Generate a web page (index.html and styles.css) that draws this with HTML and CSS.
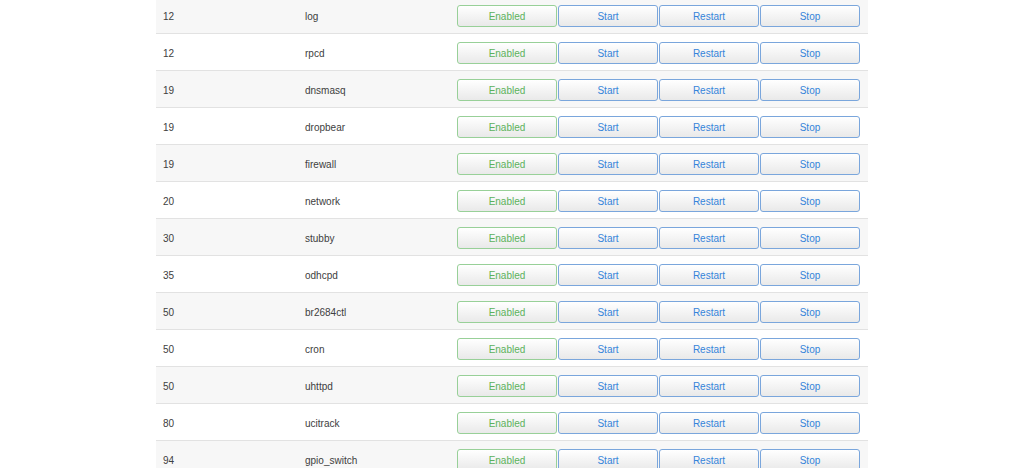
FILE: index.html
```html
<!DOCTYPE html>
<html lang="en">
<head>
  <meta charset="UTF-8">
  <meta name="viewport" content="width=device-width, initial-scale=1.0">
  <title>Startup - LuCI</title>
  <link rel="stylesheet" href="styles.css">
</head>
<body>
  <div class="initscripts">
    <div class="row"><div class="cell">12</div><div class="cell">log</div><div class="cell actions"><button class="btn btn-enabled">Enabled</button><button class="btn btn-action">Start</button><button class="btn btn-action">Restart</button><button class="btn btn-action">Stop</button></div></div>
    <div class="row"><div class="cell">12</div><div class="cell">rpcd</div><div class="cell actions"><button class="btn btn-enabled">Enabled</button><button class="btn btn-action">Start</button><button class="btn btn-action">Restart</button><button class="btn btn-action">Stop</button></div></div>
    <div class="row"><div class="cell">19</div><div class="cell">dnsmasq</div><div class="cell actions"><button class="btn btn-enabled">Enabled</button><button class="btn btn-action">Start</button><button class="btn btn-action">Restart</button><button class="btn btn-action">Stop</button></div></div>
    <div class="row"><div class="cell">19</div><div class="cell">dropbear</div><div class="cell actions"><button class="btn btn-enabled">Enabled</button><button class="btn btn-action">Start</button><button class="btn btn-action">Restart</button><button class="btn btn-action">Stop</button></div></div>
    <div class="row"><div class="cell">19</div><div class="cell">firewall</div><div class="cell actions"><button class="btn btn-enabled">Enabled</button><button class="btn btn-action">Start</button><button class="btn btn-action">Restart</button><button class="btn btn-action">Stop</button></div></div>
    <div class="row"><div class="cell">20</div><div class="cell">network</div><div class="cell actions"><button class="btn btn-enabled">Enabled</button><button class="btn btn-action">Start</button><button class="btn btn-action">Restart</button><button class="btn btn-action">Stop</button></div></div>
    <div class="row"><div class="cell">30</div><div class="cell">stubby</div><div class="cell actions"><button class="btn btn-enabled">Enabled</button><button class="btn btn-action">Start</button><button class="btn btn-action">Restart</button><button class="btn btn-action">Stop</button></div></div>
    <div class="row"><div class="cell">35</div><div class="cell">odhcpd</div><div class="cell actions"><button class="btn btn-enabled">Enabled</button><button class="btn btn-action">Start</button><button class="btn btn-action">Restart</button><button class="btn btn-action">Stop</button></div></div>
    <div class="row"><div class="cell">50</div><div class="cell">br2684ctl</div><div class="cell actions"><button class="btn btn-enabled">Enabled</button><button class="btn btn-action">Start</button><button class="btn btn-action">Restart</button><button class="btn btn-action">Stop</button></div></div>
    <div class="row"><div class="cell">50</div><div class="cell">cron</div><div class="cell actions"><button class="btn btn-enabled">Enabled</button><button class="btn btn-action">Start</button><button class="btn btn-action">Restart</button><button class="btn btn-action">Stop</button></div></div>
    <div class="row"><div class="cell">50</div><div class="cell">uhttpd</div><div class="cell actions"><button class="btn btn-enabled">Enabled</button><button class="btn btn-action">Start</button><button class="btn btn-action">Restart</button><button class="btn btn-action">Stop</button></div></div>
    <div class="row"><div class="cell">80</div><div class="cell">ucitrack</div><div class="cell actions"><button class="btn btn-enabled">Enabled</button><button class="btn btn-action">Start</button><button class="btn btn-action">Restart</button><button class="btn btn-action">Stop</button></div></div>
    <div class="row"><div class="cell">94</div><div class="cell">gpio_switch</div><div class="cell actions"><button class="btn btn-enabled">Enabled</button><button class="btn btn-action">Start</button><button class="btn btn-action">Restart</button><button class="btn btn-action">Stop</button></div></div>
  </div>
</body>
</html>
```

FILE: styles.css
```css
body {
  margin: 0;
  background-color: #fff;
  font-family: "Liberation Sans", Arial, sans-serif;
  font-size: 10px;
  color: #404040;
  overflow: hidden;
}
.initscripts {
  width: 712px;
  margin: -3px auto 0;
}
.row {
  display: grid;
  grid-template-columns: 142px 152px 1fr;
  height: 36px;
  border-bottom: 1px solid #e2e2e2;
}
.row:nth-child(odd) {
  background-color: #f7f7f7;
}
.cell {
  display: flex;
  align-items: center;
  padding: 2px 7px 0;
}
.actions {
  gap: 1px;
  padding-left: 7px;
}
.btn {
  width: 100px;
  height: 22px;
  padding: 0;
  font-family: "Liberation Sans", Arial, sans-serif;
  font-size: 10px;
  background: linear-gradient(#ffffff, #e9e9e9);
  border: 1px solid #7aa6dc;
  border-radius: 3px;
  cursor: pointer;
}
.btn-action {
  color: #3584da;
}
.btn-enabled {
  color: #5cb25c;
  border-color: #98d098;
}
```
